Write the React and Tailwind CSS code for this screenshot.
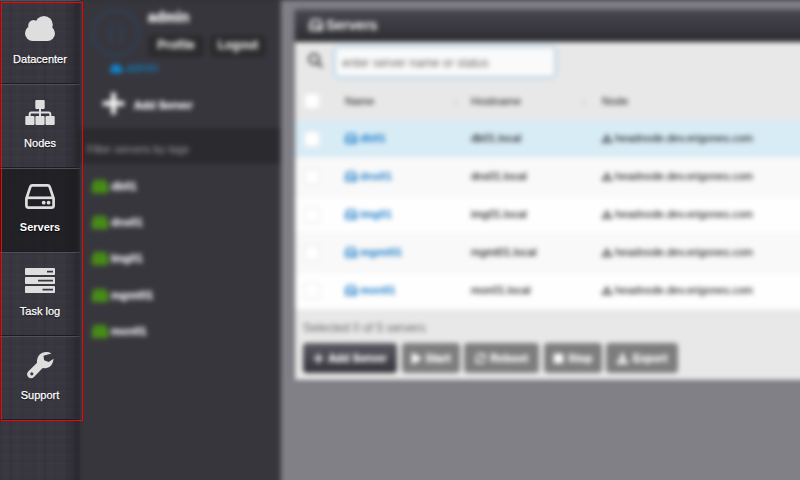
import React from "react";
import { FaPlus, FaSearch, FaPlay, FaStop, FaSitemap, FaCloud, FaSyncAlt, FaDownload } from "react-icons/fa";

const linen =
  "bg-[repeating-linear-gradient(90deg,rgba(0,0,0,0.05)_0_1px,transparent_2px_5px,rgba(255,255,255,0.012)_6px,transparent_8px_11px),repeating-linear-gradient(90deg,transparent_0_9px,rgba(0,0,0,0.04)_10px,transparent_12px_17px),repeating-linear-gradient(0deg,rgba(0,0,0,0.025)_0_1px,transparent_2px_6px,rgba(255,255,255,0.01)_7px,transparent_9px)]";

function CloudIcon() {
  return (
    <svg width="30" height="25" viewBox="0 0 30 25" fill="currentColor">
      <circle cx="19" cy="8.8" r="8.8" />
      <circle cx="8.5" cy="9.4" r="5.3" />
      <circle cx="7.8" cy="17.2" r="7.8" />
      <circle cx="22.4" cy="17.4" r="7.6" />
      <path d="M8 9h14v16H8z" />
    </svg>
  );
}

function NodesIcon() {
  return (
    <svg width="30" height="25" viewBox="0 0 30 25" fill="currentColor">
      <rect x="10.3" y="0" width="9.4" height="9" rx="1" />
      <rect x="0.3" y="16" width="9.2" height="9" rx="1" />
      <rect x="10.4" y="16" width="9.2" height="9" rx="1" />
      <rect x="20.5" y="16" width="9.2" height="9" rx="1" />
      <path d="M15 8v9M4.7 17v-3q0-1.6 1.6-1.6h17.4q1.6 0 1.6 1.6v3" fill="none" stroke="currentColor" strokeWidth="2" />
    </svg>
  );
}

function DriveIcon({ width = 30, height = 25, className = "", weight = 2.7, fill = "none" }) {
  return (
    <svg width={width} height={height} viewBox="0 0 30 25" fill={fill} stroke="currentColor" strokeWidth={weight} className={`shrink-0 ${className}`}>
      <path d="M1.4 14.5 5.3 2.9Q5.8 1.4 7.4 1.4h15.200q1.6 0 2.1 1.5l3.9 11.600v6.900q0 2.200-2.200 2.200h-22.800q-2.200 0-2.200-2.200z" />
      <path d="M1.8 13.8h26.4" />
      <circle cx="18.7" cy="18.7" r="1.9" fill="currentColor" stroke="none" />
      <circle cx="23.6" cy="18.7" r="1.9" fill="currentColor" stroke="none" />
    </svg>
  );
}

function TasksIcon() {
  return (
    <svg width="30" height="25" viewBox="0 0 30 25" fill="currentColor">
      <rect x="0" y="0" width="30" height="7" rx="0.8" />
      <rect x="0" y="9" width="30" height="7" rx="0.8" />
      <rect x="0" y="18" width="30" height="7" rx="0.8" />
      <path d="M22 3.6h6M13 12.6h15M17.5 21.6H28" stroke="#36343c" strokeWidth="1.6" />
    </svg>
  );
}

function WrenchIcon() {
  return (
    <svg width="27" height="27" viewBox="0 0 27 27" fill="currentColor" fillRule="evenodd">
      <path d="M24.5 1.4Q22 0 18.6 0.1 11.4 0.6 10 8.2q-.2 1.2.1 2.6L1.2 19.4Q-.2 21 .1 23q.8 3 4 3.2 1.600 0 2.900-1.200l8.700-8.900q1.900.5 4 0 6.200-1.700 6.900-9.400l-4.900 3.200-4.600-1.700-.6-4.500zM4.800 20.200a1.600 1.600 0 1 1 0 3.200 1.600 1.600 0 0 1 0-3.200z" />
    </svg>
  );
}

const nav = [
  { label: "Datacenter", Icon: CloudIcon },
  { label: "Nodes", Icon: NodesIcon },
  { label: "Servers", Icon: DriveIcon, active: true },
  { label: "Task log", Icon: TasksIcon },
  { label: "Support", Icon: WrenchIcon },
];

const servers = ["db01", "dns01", "img01", "mgmt01", "mon01"];

function NavRail() {
  return (
    <nav className={`w-[80px] shrink-0 h-[480px] bg-[#38363f] ${linen}`}>
      <div className="h-full bg-gradient-to-r from-transparent from-80% to-black/25">
        {nav.map(({ label, Icon, active }) => (
          <div
            key={label}
            className={`h-[84px] pt-[15px] flex flex-col items-center border-t border-t-[#504e57] border-b border-b-[#1d1c22] text-[#dedede] ${active ? "bg-[#151519]/65" : ""}`}
          >
            <div className="h-[26px]"><Icon /></div>
            <span className={`mt-[9px] text-[11px] leading-[16px] text-white [text-shadow:0_1px_1px_#000] ${active ? "font-bold" : "[-webkit-text-stroke:0.25px_white]"}`}>{label}</span>
          </div>
        ))}
      </div>
    </nav>
  );
}

function Sidebar() {
  return (
    <aside className="w-[201px] shrink-0 bg-[#37363d] text-[11px] text-white shadow-[0_0_5px_#222]">
      <div className="h-[86px] flex pl-[12px] pt-[9px]">
        <div className="w-[56px] shrink-0">
          <div className="size-[48px] rounded-full border-[3px] border-[#2e4153] flex items-center justify-center">
            <div className="w-[14px] h-[24px] border-x-[3px] border-[#2e4153] rounded-full" />
          </div>
          <div className="mt-[3px] ml-[18px] w-[60px] flex items-center gap-[3px] text-[#0f86cf] leading-[16px] text-[12px]">
            <FaCloud size={13} className="shrink-0" />admin
          </div>
        </div>
        <div>
          <div className="text-[14px] leading-[16px] font-bold [-webkit-text-stroke:0.3px_white]">admin</div>
          <div className="flex gap-[6px] mt-[10px] font-bold text-[12px]">
            <span className="w-[56px] h-[22px] leading-[21px] text-center bg-[#2b2b2d] rounded">Profile</span>
            <span className="w-[56px] h-[22px] leading-[21px] text-center bg-[#2b2b2d] rounded">Logout</span>
          </div>
        </div>
      </div>
      <div className="h-[42px] pl-[21px] pb-[8px] flex items-center gap-[8px] font-bold">
        <FaPlus size={25} /><span className="pt-[5px] [-webkit-text-stroke:0.3px_white]">Add Server</span>
      </div>
      <div className="h-[38px] bg-[#2b2a2f] border-b border-[#45444b] pl-[7px] pt-[5px] leading-[32px] text-[#a3a2a8]">
        Filter servers by tags
      </div>
      {servers.map((s) => (
        <div key={s} className="h-[36.3px] pl-[12px] pt-[4px] flex items-center gap-[3px] font-bold text-[#f0f0f2] [-webkit-text-stroke:0.3px_#f0f0f2]">
          <DriveIcon width={16} height={13} weight={5} fill="#437f1b" className="text-[#4b9715]" />{s}
        </div>
      ))}
    </aside>
  );
}

function Checkbox() {
  return <span className="block size-[16px] rounded-[2px] bg-white border border-[#e4e4e4]" />;
}

const cols = "grid grid-cols-[41px_126px_131px_1fr] items-center pl-[9px]";

function ServerTable() {
  return (
    <div>
      <div className={`h-[32px] pb-[6px] ${cols} text-[#333] [-webkit-text-stroke:0.2px_#444]`}>
        <Checkbox />
        <span className="flex justify-between pr-[13px]">Name<i className="not-italic text-[#b5b5b5] [-webkit-text-stroke:0]">↕</i></span>
        <span className="flex justify-between pr-[16px]">Hostname<i className="not-italic text-[#b5b5b5] [-webkit-text-stroke:0]">↕</i></span>
        <span>Node</span>
      </div>
      {servers.map((s, i) => (
        <div key={s} className={`h-[38px] ${cols} border-b border-[#f0f0f0] ${i === 0 ? "bg-[#d8ecf6]" : i % 2 ? "bg-[#f9f9f9]" : "bg-[#fefefe]"}`}>
          <Checkbox />
          <span className="flex items-center gap-[3px] font-bold text-[#1478c8]"><DriveIcon width={12} height={11} weight={4} />{s}</span>
          <span className="text-[#111] [-webkit-text-stroke:0.2px_#222]">{s}.local</span>
          <span className="flex items-center gap-[3px] text-[#111] [-webkit-text-stroke:0.1px_#222]"><FaSitemap size={10} />headnode.dev.erigones.com</span>
        </div>
      ))}
    </div>
  );
}

const actions = [
  { label: "Add Server", Icon: FaPlus, w: "w-[94px] bg-gradient-to-b from-[#5a5962] to-[#35343b]" },
  { label: "Start", Icon: FaPlay, w: "w-[58px] bg-[#7d7d7d]" },
  { label: "Reboot", Icon: FaSyncAlt, w: "w-[75px] bg-[#7d7d7d]" },
  { label: "Stop", Icon: FaStop, w: "w-[58px] bg-[#7d7d7d]" },
  { label: "Export", Icon: FaDownload, w: "w-[72px] bg-[#7d7d7d]" },
];

function MainPanel() {
  return (
    <main className="flex-1 pt-[10px] pl-[14px] bg-[#828087]">
      <section className="h-[370px] bg-[#e8e8e8] text-[11px] shadow-[0_0_4px_#555]">
        <header className="h-[32px] bg-gradient-to-b from-[#484650] to-[#2c2d31] pl-[14px] pb-[2px] flex items-center gap-[3px] text-[14px] font-bold text-white">
          <DriveIcon width={14} height={12} weight={3.5} />Servers
        </header>
        <div className="h-[46px] pl-[13px] pt-[5px] flex gap-[12px]">
          <FaSearch size={15} className="mt-[6px] text-[#555]" />
          <div className="w-[220px] h-[30px] rounded-[3px] border border-[#b5d2e8] shadow-[0_0_5px_#a9cde8] bg-[#fafafa] pl-[6px] leading-[30px] text-[12px] text-[#666]">
            enter server name or status
          </div>
        </div>
        <ServerTable />
        <div className="pl-[8px]">
          <p className="pt-[10px] leading-[17px] text-[12px] text-[#666]">Selected 0 of 5 servers</p>
          <div className="flex gap-[4.6px] mt-[6px]">
            {actions.map(({ label, Icon, w }) => (
              <span key={label} className={`${w} h-[30px] rounded-[4px] flex items-center justify-center gap-[4px] font-bold text-white [-webkit-text-stroke:0.3px_white]`}>
                <Icon size={11} />{label}
              </span>
            ))}
          </div>
        </div>
      </section>
    </main>
  );
}

export default function App() {
  return (
    <div className="relative w-[800px] h-[480px] overflow-hidden bg-[#37363d] font-['Liberation_Sans',Arial,sans-serif]">
      <div className="flex">
        <NavRail />
        <div className="flex w-[750px] shrink-0 h-[500px] blur-[2.5px]">
          <Sidebar />
          <MainPanel />
        </div>
      </div>
      <div className="absolute left-[1px] top-[2px] w-[82px] h-[419px] border border-[#ff0000]" />
    </div>
  );
}
